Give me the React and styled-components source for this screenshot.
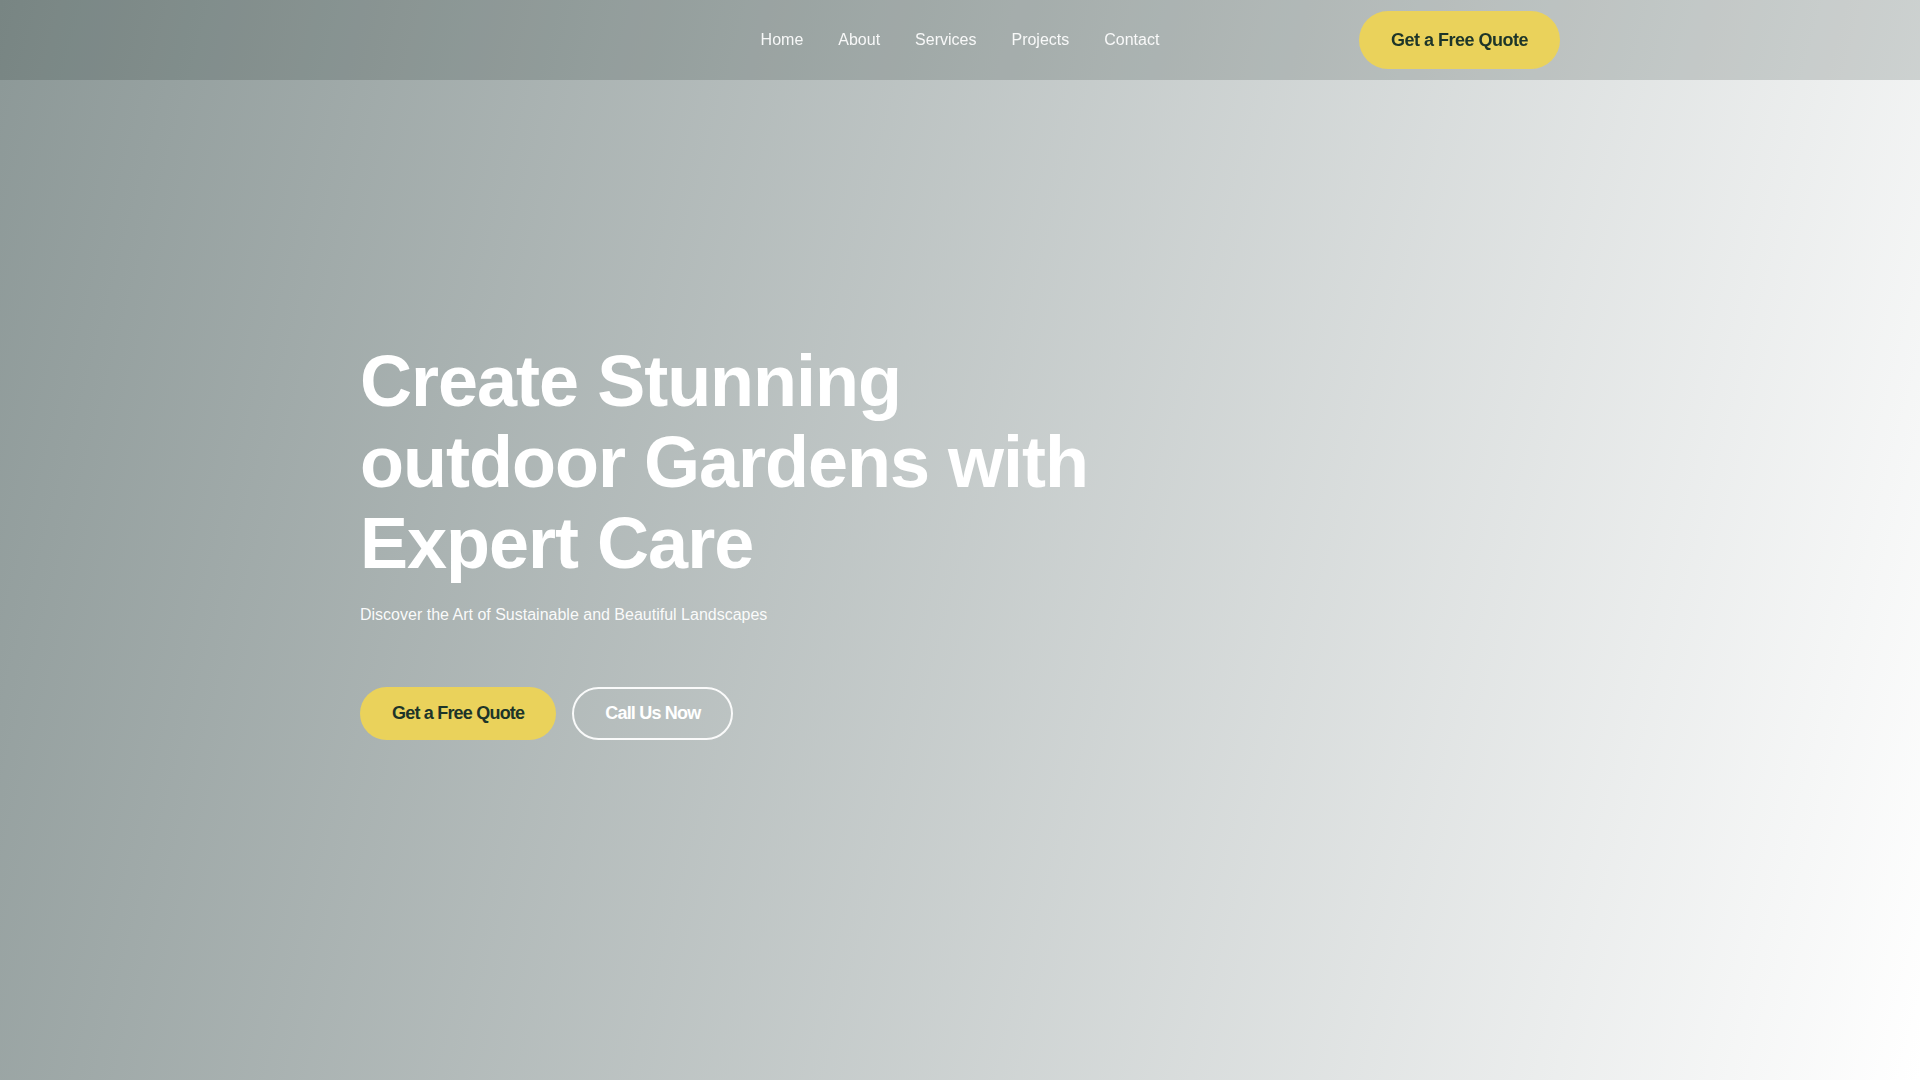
import React from 'react';
import styled, { createGlobalStyle } from 'styled-components';

const GlobalStyle = createGlobalStyle`
    * {
        box-sizing: border-box;
    }
    html, body {
        margin: 0;
        padding: 0;
    }
    body {
        font-family: "Liberation Sans", Arial, Helvetica, sans-serif;
        color: #fff;
        background: #fff;
    }
`;

const Header = styled.header`
    position: fixed;
    top: 0;
    left: 0;
    right: 0;
    height: 80px;
    background: rgba(20, 35, 32, 0.16);
    z-index: 10;
`;

const HeaderInner = styled.div`
    width: 1200px;
    height: 100%;
    margin: 0 auto;
    display: grid;
    grid-template-columns: 1fr auto 1fr;
    align-items: center;
`;

const Nav = styled.nav`
    grid-column: 2;
    display: flex;
    gap: 35px;
`;

const NavLink = styled.a`
    font-size: 16px;
    line-height: 20px;
    color: rgba(255, 255, 255, 0.92);
    text-decoration: none;
    cursor: pointer;
`;

const Button = styled.a`
    display: inline-flex;
    align-items: center;
    justify-content: center;
    padding: 16px 32px;
    border-radius: 999px;
    font-size: 18px;
    line-height: 21px;
    font-weight: 700;
    letter-spacing: -0.8px;
    text-decoration: none;
    cursor: pointer;
    white-space: nowrap;
    background: ${p => (p.$outline ? 'transparent' : '#ead25b')};
    color: ${p => (p.$outline ? '#fff' : '#1d3529')};
    border: ${p => (p.$outline ? '2px solid rgba(255, 255, 255, 0.92)' : 'none')};
    ${p => p.$outline && 'padding: 14px 31px;'}
`;

const HeaderButton = styled(Button)`
    grid-column: 3;
    justify-self: end;
    padding: 18px 32px;
    line-height: 22px;
    letter-spacing: -0.5px;
`;

const Hero = styled.section`
    height: 100vh;
    min-height: 1080px;
    display: flex;
    align-items: center;
    background: linear-gradient(105deg, #8c9897 0%, #ffffff 100%);
`;

const HeroInner = styled.div`
    width: 1200px;
    margin: 0 auto;
`;

const Title = styled.h1`
    margin: 0;
    max-width: 760px;
    font-size: 72px;
    line-height: 81px;
    font-weight: 700;
    letter-spacing: -1px;
    color: #fff;
`;

const Subtitle = styled.p`
    margin: 19px 0 0;
    font-size: 16px;
    line-height: 24px;
    color: rgba(255, 255, 255, 0.95);
`;

const Actions = styled.div`
    margin-top: 60px;
    display: flex;
    gap: 16px;
`;

const links = ['Home', 'About', 'Services', 'Projects', 'Contact'];

const App = () => {
    return (
        <>
            <GlobalStyle />
            <Header>
                <HeaderInner>
                    <Nav>
                        {links.map(link => (
                            <NavLink key={link}>{link}</NavLink>
                        ))}
                    </Nav>
                    <HeaderButton>Get a Free Quote</HeaderButton>
                </HeaderInner>
            </Header>
            <Hero>
                <HeroInner>
                    <Title>Create Stunning outdoor Gardens with Expert Care</Title>
                    <Subtitle>Discover the Art of Sustainable and Beautiful Landscapes</Subtitle>
                    <Actions>
                        <Button>Get a Free Quote</Button>
                        <Button $outline>Call Us Now</Button>
                    </Actions>
                </HeroInner>
            </Hero>
        </>
    );
};

export default App;
